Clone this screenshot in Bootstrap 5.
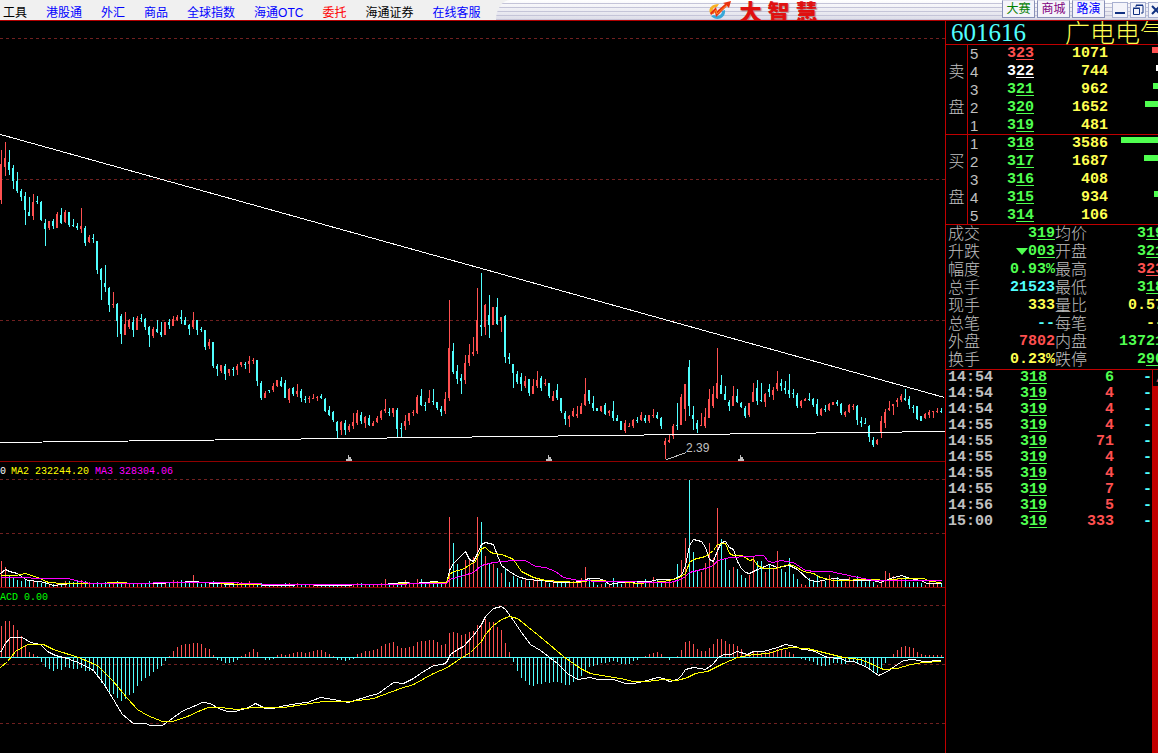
<!DOCTYPE html>
<html lang="zh-CN">
<head>
<meta charset="utf-8">
<meta name="viewport" content="width=device-width, initial-scale=1">
<title>大智慧 - 601616 广电电气</title>
<link href="https://cdn.jsdelivr.net/npm/bootstrap@5.3.0/dist/css/bootstrap.min.css" rel="stylesheet">
<script src="https://cdn.jsdelivr.net/npm/bootstrap@5.3.0/dist/js/bootstrap.bundle.min.js"></script>
<style>
  :root { --up:#ff5050; --down:#50ffff; --green:#50ff50; --yellow:#ffff50; --rule:#c00000; --label:#c0c0c0; }
  body { background:#000; font-family:"Liberation Sans","Noto Sans CJK SC",sans-serif; font-size:12px; }
  .topbar { height:21px; background:#f0f0f0; border-bottom:1px solid #b00000; }
  .menu { gap:19px; padding:4px 16px 0 3px; line-height:18px; white-space:nowrap; }
  .menu a { color:#00f; text-decoration:none; }
  .menu a.plain { color:#000; }
  .menu a.hot { color:#f00; }
  .brandbar { border-top-left-radius:22px 30px; background:repeating-linear-gradient(transparent 0, transparent 3px, #c4c4d8 3px, #c4c4d8 4px), linear-gradient(#fff, #dcdce8); }
  .brand-logo { margin-left:212px; gap:7px; height:20px; }
  .brand-name { color:#e01010; font:900 22px/20px "Noto Sans CJK SC",sans-serif; text-shadow:1px 1px 1px #a88; white-space:nowrap; }
  .brand-name span + span { margin-left:6px; }
  .tools { margin-right:-6px; gap:2px; }
  .tools button { height:18px; padding:0; border:1px solid #8890b8; border-top-color:#d8d8e8; background:#f4f4fa; line-height:16px; }
  .tool-tab { width:33px; }
  .winbox { gap:2px; margin-left:5px; }
  .winbox button { width:16px; height:16px; border-color:#a8b0d0; }
  .winbox svg { display:block; }
  .price-pane { height:441px; } .vol-pane { height:126px; }
  .price-pane, .vol-pane { border-bottom:1px solid #900000; }
  .pane svg { display:block; width:100%; height:100%; }
  svg .mono { font-family:"Liberation Mono",monospace; }
  .quote { width:213px; border-left:1px solid var(--rule); font:bold 15px/18px "Liberation Mono","Noto Sans CJK SC",monospace; }
  .quote-inner { width:219px; min-height:100%; }
  .stock-head { height:24px; padding-left:5px; border-bottom:1px solid var(--rule); line-height:23px; font-weight:400; white-space:nowrap; }
  .stock-code { color:var(--down); font-family:"Liberation Serif",serif; font-size:25px; }
  .stock-name { color:var(--yellow); font-family:"Noto Sans CJK SC",sans-serif; font-size:25px; line-height:21px; font-weight:300; }
  .quote table { border-collapse:separate; border-spacing:0; table-layout:fixed; width:100%; }
  .quote th, .quote td { padding:0; height:18px; line-height:17px; text-align:right; vertical-align:top; white-space:nowrap; }
  .book tr:last-child > * { border-bottom:1px solid var(--rule); }
  .quote .side { color:var(--label); font:300 16px/15px "Noto Sans CJK SC",sans-serif; text-align:center; border-right:1px solid var(--rule); }
  .quote .level { color:var(--label); font:400 15px/17px "Liberation Sans",sans-serif; text-align:left; padding-left:2px; }
  .depth { height:6px; margin:2px 0 0 auto; background:currentColor; }
  .info { border-bottom:1px solid var(--rule)!important; }
  .quote .info th { color:var(--label); font:300 16px/15px "Noto Sans CJK SC",sans-serif; text-align:left; }
  .quote .info th:first-child { padding-left:2px; }
  .quote .info td:last-child { padding-right:1px; }
  .quote .ticks td { height:16px; line-height:16px; }
  .quote .ticks td:first-child { text-align:left; padding-left:2px; color:var(--label); }
  .ticks { width:206px!important; }
  .scroll-track { width:13px; background:var(--rule); }
  .scroll-up { height:16px; padding:4px 0 0; border:0; border-left:1px solid var(--rule); background:#000; color:var(--up); font-size:9px; line-height:9px; }
  u { text-underline-offset:2px; text-decoration-thickness:1px; }
  .up { color:var(--up); } .dn { color:var(--green); } .yl { color:var(--yellow); } .cy { color:var(--down); } .wh { color:#fff; }
  .fall { display:inline-block; border:6px solid transparent; border-top:7px solid var(--green); border-bottom:0; }
</style>
</head>
<body class="d-flex flex-column vh-100 overflow-hidden">
<header class="topbar d-flex overflow-hidden flex-shrink-0">
  <nav class="menu d-flex" aria-label="主菜单">
    <a class="plain" href="#">工具</a><a href="#">港股通</a><a href="#">外汇</a><a href="#">商品</a><a href="#">全球指数</a><a href="#">海通OTC</a><a class="hot" href="#">委托</a><a class="plain" href="#">海通证券</a><a href="#">在线客服</a>
  </nav>
  <div class="brandbar d-flex flex-grow-1">
    <div class="brand-logo d-flex align-items-center">
      <svg width="24" height="20" viewBox="0 0 24 20" aria-hidden="true">
        <path d="M2 13C0 8 4 4 11 4L9 7C6 7 4 9 5 12Z" fill="#f8b020"/>
        <path d="M3 16C9 22 18 18 17 10L14 11C14 15 10 17 6 15Z" fill="#38a8d8"/>
        <path d="M2 13L8 7L9 11L17 4L15 3L23 1L21 8L19 6L8 17L7 12L3 15Z" fill="#e83010"/>
        <path d="M5 14L8 10L9 14L19 5" fill="none" stroke="#ff9020"/>
      </svg>
      <span class="brand-name"><span>大</span><span>智</span><span>慧</span></span>
    </div>
    <div class="tools d-flex ms-auto">
      <button class="tool-tab" style="color:#008000">大赛</button>
      <button class="tool-tab" style="color:#800080">商城</button>
      <button class="tool-tab" style="color:#0000ff">路演</button>
      <div class="winbox d-flex align-items-center">
        <button aria-label="最小化"><svg width="14" height="14"><path d="M2 9h10v2H2z" fill="#103080"/></svg></button>
        <button aria-label="还原"><svg width="14" height="14" fill="none" stroke="#103080"><path d="M5 4V2.5h7V10h-2M5 2h7M2.5 5.5h6v6h-6zM2 5h7"/></svg></button>
        <button aria-label="关闭"><svg width="14" height="14" stroke="#103080" stroke-width="2"><path d="M3 3l8 8M11 3l-8 8"/></svg></button>
      </div>
    </div>
  </div>
</header>
<main class="d-flex flex-grow-1 overflow-hidden">
  <section class="d-flex flex-column flex-grow-1 overflow-hidden" aria-label="走势图">
    <div class="pane price-pane"><svg><g id="price" transform="translate(0 -21)"></g></svg></div>
    <div class="pane vol-pane"><svg><g id="volume" transform="translate(0 -462)"></g></svg></div>
    <div class="pane flex-grow-1"><svg><g id="macd" transform="translate(0 -588)"></g></svg></div>
  </section>
  <aside class="quote overflow-hidden flex-shrink-0">
    <div class="quote-inner d-flex flex-column">
      <div class="stock-head d-flex justify-content-between"><span class="stock-code">601616</span><span class="stock-name">广电电气</span></div>
      <table class="book"><colgroup><col style="width:22px"><col style="width:20px"><col style="width:46px"><col style="width:74px"><col></colgroup><tbody id="book"></tbody></table>
      <table class="info"><colgroup><col style="width:36px"><col style="width:73px"><col style="width:34px"><col></colgroup>
        <tbody>
        <tr><th>成交</th><td class="dn">3<u>19</u></td><th>均价</th><td class="dn">3<u>19</u></td></tr>
        <tr><th>升跌</th><td class="dn"><span class="fall"></span>0<u>03</u></td><th>开盘</th><td class="dn">3<u>21</u></td></tr>
        <tr><th>幅度</th><td class="dn">0.93%</td><th>最高</th><td class="up">3<u>23</u></td></tr>
        <tr><th>总手</th><td class="cy">21523</td><th>最低</th><td class="dn">3<u>18</u></td></tr>
        <tr><th>现手</th><td class="yl">333</td><th>量比</th><td class="yl">0.57</td></tr>
        <tr><th>总笔</th><td class="cy">--</td><th>每笔</th><td class="yl">--</td></tr>
        <tr><th>外盘</th><td class="up">7802</td><th>内盘</th><td class="dn">13721</td></tr>
        <tr><th>换手</th><td class="yl">0.23%</td><th>跌停</th><td class="dn">2<u>90</u></td></tr>
        </tbody></table>
      <div class="d-flex flex-grow-1 align-items-stretch">
        <div class="flex-shrink-0"><table class="ticks"><colgroup><col style="width:50px"><col style="width:51px"><col style="width:67px"><col></colgroup><tbody id="ticks"></tbody></table></div>
        <div class="scroll-track d-flex flex-column"><button class="scroll-up" aria-label="向上滚动">▲</button></div>
      </div>
    </div>
  </aside>
</main>
<script>
// One candle each: colour, high, low, body top, body bottom
const candles = `R150 204 164 200,R142 176 158 167,C150 175 162 170,C165 189 168 181,C172 193 181 191,C189 201 191 197,C192 225 196 210,C197 216 212 216,R194 220 202 216,C196 204 201 202,C201 221 202 220,C219 246 223 229,R221 230 221 228,C219 229 221 226,R212 228 214 228,C208 224 215 223,R210 223 212 222,C212 227 212 225,C219 227 225 226,C223 230 226 228,R208 233 226 229,C226 246 228 243,R235 243 237 242,C234 243 238 239,C241 274 241 270,C268 300 269 280,C265 292 283 287,C287 312 288 305,R292 308 304 305,C303 337 304 321,C314 344 316 334,R312 335 324 335,R319 329 320 327,C317 337 322 330,R316 330 318 330,C314 322 318 319,C318 330 319 327,C326 347 327 335,R327 338 329 336,C320 333 329 332,C322 337 332 335,R322 335 322 335,C319 329 322 325,R316 326 319 326,R315 321 317 320,C310 324 317 319,C317 325 320 325,C324 335 325 329,R312 329 320 327,C320 335 320 330,C327 332 329 330,
C330 350 330 347,R339 349 342 346,C342 368 342 366,C364 376 366 369,R365 373 365 371,C364 380 366 374,R369 376 369 373,C367 376 369 370,R364 375 366 370,R362 367 362 365,C362 369 364 365,R356 373 361 364,R358 364 360 361,C360 386 360 381,C381 400 383 398,R391 398 393 398,C390 393 390 391,R383 392 386 390,R380 387 380 386,C377 387 381 386,C380 398 383 398,R388 403 389 400,C387 396 388 394,R384 397 391 394,C389 402 391 398,C396 403 399 400,R396 403 398 399,R394 399 398 399,R396 401 397 398,C394 399 396 398,C398 412 399 411,C406 416 410 415,C411 422 412 420,C421 438 422 431,R421 435 422 430,C420 435 423 430,R424 432 426 430,R413 429 422 426,R410 425 413 423,C412 424 415 421,R416 428 417 423,C415 426 418 425,R421 426 423 426,R416 423 418 422,R410 420 411 418,R399 413 409 411,C408 416 412 413,R408 417 408 413,C408 437 410 429,C423 437 428 429,R415 430 421 426,R413 425 413 421,R410 416 412 413,R395 414 397 413,C389 406 396 405,C402 411 405 406,R390 403 398 403,C389 405 401 402,
C402 410 402 408,C406 416 409 412,R392 414 399 411,R300 401 348 398,C343 374 351 372,C365 384 371 379,C374 394 378 381,R355 384 363 380,R344 366 355 363,R337 356 352 354,R288 354 320 351,C273 336 325 327,R304 335 305 327,C295 338 315 325,R307 325 307 325,C298 325 307 324,R317 332 317 321,C315 363 316 357,C353 364 357 359,C364 388 364 373,C371 384 374 382,C373 391 377 384,R376 388 381 386,C379 396 379 393,R379 394 386 394,R371 388 380 386,C376 391 378 388,R379 386 383 384,C383 398 383 396,R391 401 396 401,C384 400 390 398,C398 413 398 411,C411 425 413 419,R415 427 416 419,R408 417 411 416,R406 418 414 416,R403 414 406 414,R378 406 394 405,C390 404 390 401,C396 411 403 408,C408 411 408 411,R406 412 406 411,C403 415 405 414,R410 416 411 413,C401 421 411 418,C415 421 418 421,C421 430 421 430,R420 433 423 431,R423 427 426 427,R419 428 420 426,C417 423 420 421,R412 421 415 420,C415 423 418 421,R415 423 415 421,R409 418 415 416,C412 419 415 418,C417 429 418 426,
R438 459 441 445,R434 443 440 442,R424 439 426 436,C403 430 425 426,R394 425 397 425,R384 421 384 409,C360 416 367 406,C406 430 415 419,C420 433 423 429,R413 426 425 426,R408 428 417 426,R389 418 399 418,R386 408 394 406,R348 399 383 398,C375 394 385 394,C386 400 394 400,C400 411 402 406,R386 406 396 406,C389 403 396 402,C402 408 403 407,C406 418 408 416,R403 417 403 415,R383 402 392 402,C380 405 388 401,C383 402 400 401,R393 407 394 402,C384 397 389 392,R387 400 390 395,R371 391 383 389,C379 391 383 386,C381 394 388 390,C374 398 390 394,C389 398 393 394,C393 408 395 406,R400 408 401 406,R398 401 399 401,C393 401 399 400,C398 407 399 405,C399 416 404 414,R408 416 409 415,C405 412 409 410,R403 411 404 410,R402 405 402 405,C400 406 402 404,C403 415 404 413,R411 417 412 415,R404 413 405 412,R404 410 406 407,C405 425 406 420,C417 427 421 423,C418 424 423 424,C425 442 426 437,C437 447 440 445,R439 445 440 444,R416 438 421 433,R409 428 412 423,R401 411 408 410,R404 415 404 406,R398 407 400 402,R394 402 396 400,C389 401 398 400,C396 409 399 405,C405 413 407 408,C406 420 406 419,C416 421 416 421,R413 419 414 418,R410 418 412 415,R411 418 411 412,R408 413 411 412,C408 413 411 412`
  .split(',').map(s => { s = s.trim(); return [s[0], ...s.slice(1).split(' ').map(Number)]; });
const volumes = [26,20,11,9,7,6,8,7,6,5,4,4,2,3,4,4,6,6,5,6,7,6,5,4,5,4,5,4,4,6,5,4,4,3,4,4,4,6,4,4,5,4,4,7,6,7,5,5,12,4,3,5,3,6,4,3,3,4,3,4,5,4,6,4,4,4,3,2,2,2,2,4,4,3,4,3,3,3,3,2,3,2,3,3,2,3,3,2,2,4,4,3,3,3,3,4,8,4,4,4,4,7,5,4,8,8,4,5,4,4,3,3,
70,44,23,18,27,29,30,70,65,31,24,23,19,14,18,5,11,9,7,8,6,8,9,8,6,4,6,5,5,5,5,6,7,9,20,9,6,2,3,4,2,9,5,3,5,5,4,5,6,8,5,10,7,6,6,7,5,23,27,49,107,35,16,15,24,44,29,79,48,29,17,20,18,12,9,12,31,26,26,15,22,19,36,18,15,29,13,8,3,2,9,6,11,7,6,12,9,10,8,5,10,7,11,7,5,7,5,2,6,16,14,11,9,8,10,5,5,5,4,2,5,3,5,3];
const hist = [31,36,36,32,27,21,12,5,3,1,-5,-10,-12,-14,-12,-13,-10,-11,-12,-12,-11,-14,-14,-14,-20,-26,-30,-35,-37,-41,-44,-42,-38,-36,-29,-24,-21,-19,-15,-12,-9,-4,1,6,10,12,13,13,14,14,13,9,8,2,-3,-4,-6,-6,-5,-3,1,3,5,8,5,0,-3,-3,-2,2,3,2,3,4,5,5,4,5,6,7,7,5,3,1,-3,-3,-4,-3,-2,3,4,6,6,7,8,11,13,14,15,11,9,9,10,11,15,16,16,17,17,15,12,13,24,25,24,22,23,25,26,32,34,38,35,35,30,27,14,5,-5,-14,-21,-24,-28,-29,-27,-27,-25,-26,-25,-25,-26,-28,-28,-25,-23,-19,-14,-10,-9,-8,-6,-6,-5,-4,-5,-7,-7,-7,-4,-3,0,1,3,4,5,3,-1,-3,-1,1,7,15,16,13,8,6,6,9,13,18,18,16,13,13,11,8,4,4,6,6,4,5,6,6,8,8,7,5,3,-1,-2,-3,-4,-5,-8,-9,-9,-8,-6,-6,-7,-7,-5,-5,-7,-8,-9,-13,-16,-16,-12,-6,-1,3,7,10,11,10,9,5,3,2,2,2,2,2];
const UP = '#ff5050', DOWN = '#50ffff';
const rect = (x, y, w, h, c) => `<rect x="${x}" y="${y}" width="${w}" height="${h}" fill="${c}" shape-rendering="crispEdges"/>`;
const grid = ys => ys.map(y => `<line x1="0" x2="4000" y1="${y}.5" y2="${y}.5" stroke="#702020" stroke-dasharray="3 3" shape-rendering="crispEdges"/>`).join('');
const curve = (pts, c) => `<polyline points="${pts}" fill="none" stroke="${c}" shape-rendering="crispEdges" transform="translate(.5 .5)"/>`;
const tone = k => candles[k][0] === 'R' ? UP : DOWN;
const marker = x => `<path d="M${x} 455h1v2h2v2h1v2h-6v-2h2v-2z" fill="#c0c0c0" shape-rendering="crispEdges"/>`;

document.getElementById('price').innerHTML = grid([38,179,320]) +
  candles.map(([c,h,l,t,b], k) => rect(1+4*k,h,1,l-h,tone(k)) + rect(4*k,t,2,b-t,tone(k))).join('') +
  curve('0,134 944,397','#fff') + curve('0,442 945,431','#fff') +
  [348,548,740].map(marker).join('') + curve('666,459 686,452','#c0c0c0') +
  '<text x="686" y="452" font-size="12" fill="#c0c0c0">2.39</text>';

document.getElementById('volume').innerHTML = grid([479,533]) +
  volumes.map((v,k) => rect(1+4*k,587-v,1,v,tone(k))).join('') +
  curve('0,573 5,569 9,571 17,573 21,576 27,580 40,581 47,583 53,585 62,584 72,583 88,583 110,583 155,583 177,582 193,581 213,583 233,584 250,584 272,585 283,585 307,584 320,585 383,584 403,582 413,583 435,581 446,583 449,570 453,563 465,551 469,559 473,561 477,553 481,544 485,542 493,544 497,555 501,565 505,568 509,571 517,576 527,579 540,580 557,582 570,582 582,581 588,578 597,578 602,579 609,584 620,582 650,581 657,579 673,579 681,575 685,565 689,545 693,539 701,541 705,547 709,559 713,561 717,550 721,542 725,541 729,547 733,549 737,561 741,568 745,572 749,573 757,569 769,564 777,567 789,565 797,569 809,580 817,581 833,578 853,580 873,580 880,582 890,578 901,575 910,578 920,580 927,583 941,583','#fff') +
  curve('0,575 15,575 25,573 37,577 48,582 63,583 93,583 120,582 133,583 173,582 213,582 240,584 290,584 383,584 413,583 446,582 449,574 453,571 462,569 470,564 475,561 481,548 485,547 489,551 493,553 501,554 509,557 513,559 517,565 521,571 533,577 545,580 577,582 590,580 620,581 637,583 663,581 677,578 685,573 689,562 693,559 705,556 713,550 717,544 725,543 729,553 733,555 742,555 749,560 753,559 757,565 763,568 775,568 789,564 795,566 803,571 813,573 820,577 833,580 873,579 885,580 900,578 923,578 930,581 941,582','#ff0') +
  curve('0,577 23,577 38,578 67,578 80,581 90,583 133,583 173,582 227,582 272,584 380,584 433,583 446,583 449,579 463,575 473,572 481,565 493,562 512,560 525,560 535,566 545,567 555,571 563,577 578,580 603,581 670,582 680,579 685,576 689,572 705,568 713,565 717,560 730,557 747,556 763,555 768,561 773,562 780,560 793,562 805,570 815,571 830,571 853,576 873,580 941,580','#f0f') +
  '<g class="mono" font-size="10"><text x="0" y="474" fill="#fff">0</text><text x="11" y="474" fill="#ff0">MA2 232244.20</text><text x="95" y="474" fill="#f0f">MA3 328304.06</text></g>';

document.getElementById('macd').innerHTML = grid([605,664,723]) +
  hist.map((v,k) => v > 0 ? rect(1+4*k,657-v,1,v,UP) : rect(1+4*k,657,1,-v,DOWN)).join('') +
  rect(0,657,944,1,DOWN) +
  curve('0,652 5,643 10,637 22,637 30,642 40,644 47,651 55,655 67,658 80,663 93,670 103,683 113,699 122,714 133,723 145,723 150,725 162,725 173,717 183,710 193,706 202,702 210,703 218,708 227,711 235,711 248,707 255,703 265,708 273,708 280,706 297,703 307,702 320,697 333,699 348,702 367,696 378,693 393,682 403,683 413,678 420,673 433,665 442,664 446,662 450,654 457,649 463,646 473,635 481,624 485,616 493,608 501,606 505,609 513,620 521,632 530,644 540,650 557,663 567,673 577,679 590,677 597,679 613,679 625,683 633,683 647,680 657,677 663,678 669,681 677,679 681,675 685,669 693,667 705,669 712,664 718,657 723,654 730,654 737,651 747,654 753,651 763,651 777,647 785,644 795,646 802,649 812,650 827,657 840,658 847,661 853,661 867,667 878,675 887,671 897,664 903,660 913,659 923,661 941,660','#fff') +
  curve('0,667 7,661 15,651 27,644 43,644 53,649 78,657 97,665 113,681 127,698 137,709 147,715 162,721 172,721 187,716 200,710 208,707 220,707 237,709 253,707 283,707 323,701 350,701 373,698 400,688 413,684 433,673 447,667 460,658 470,652 481,641 485,634 493,625 501,619 509,616 517,618 527,626 543,639 563,656 580,668 590,673 607,676 620,678 633,681 647,681 663,679 677,680 687,677 695,673 707,671 723,663 737,657 753,654 768,653 780,649 790,647 807,648 823,652 843,657 860,659 870,663 883,669 897,668 910,664 923,662 941,661','#ff0') +
  '<text class="mono" font-size="10" x="0" y="600" fill="#0f0">ACD 0.00</text>';

// Order book: side mark, level, price, volume, colour
const book = [['',5,323,1071,'up'],['卖',4,322,744,'wh'],['',3,321,962,'dn'],['盘',2,320,1652,'dn'],['',1,319,481,'dn'],
  ['',1,318,3586,'dn'],['买',2,317,1687,'dn'],['',3,316,408,'dn'],['盘',4,315,934,'dn'],['',5,314,106,'dn']];
const px = p => String(p)[0] + '<u>' + String(p).slice(1) + '</u>';
const rows = list => list.map(([s,l,p,v,c]) => `<tr><td class="side">${s}</td><td class="level">${l}</td><td class="${c}">${px(p)}</td><td class="yl">${v}</td><td class="${c}"><div class="depth" style="width:${Math.round(v/82)}px"></div></td></tr>`).join('');
const bookBody = document.getElementById('book');
bookBody.innerHTML = rows(book.slice(0,5));
bookBody.insertAdjacentHTML('afterend', `<tbody>${rows(book.slice(5))}</tbody>`);

const ticks = [['14:54',318,6,'dn'],['14:54',319,4,'up'],['14:54',319,4,'up'],['14:55',319,4,'up'],['14:55',319,71,'up'],['14:55',319,4,'up'],['14:55',319,4,'up'],['14:55',319,7,'up'],['14:56',319,5,'up'],['15:00',319,333,'up']];
document.getElementById('ticks').innerHTML = ticks.map(([t,p,v,c]) => `<tr><td>${t}</td><td class="dn">${px(p)}</td><td class="${c}">${v}</td><td class="cy">-</td></tr>`).join('');
</script>
</body>
</html>
